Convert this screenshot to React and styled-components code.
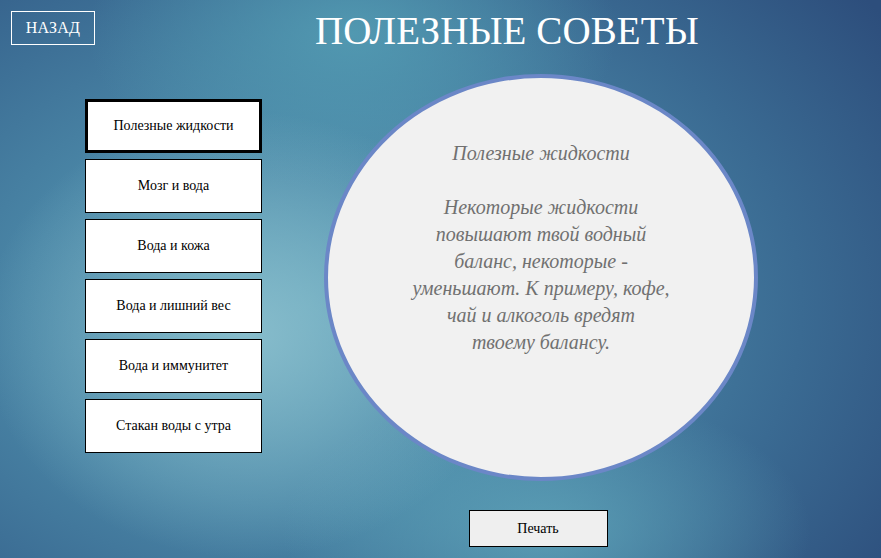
import React from "react";
import styled, { createGlobalStyle } from "styled-components";

const GlobalStyle = createGlobalStyle`
  html, body {
    margin: 0;
    padding: 0;
  }
  body {
    font-family: "Liberation Serif", "DejaVu Serif", serif;
  }
`;

const Page = styled.div`
  width: 881px;
  height: 558px;
  overflow: hidden;
  box-sizing: border-box;
  padding: 11px 0 0 11px;
  background:
    radial-gradient(ellipse 30% 40% at 28% 60%, rgba(140, 192, 206, 0.9) 0%, rgba(140, 192, 206, 0) 100%),
    radial-gradient(ellipse 30% 28% at 40% 6%, rgba(84, 158, 180, 0.85) 0%, rgba(84, 158, 180, 0) 100%),
    radial-gradient(ellipse 30% 25% at 62% 95%, rgba(96, 166, 186, 0.8) 0%, rgba(96, 166, 186, 0) 100%),
    radial-gradient(ellipse 80% 90% at 35% 55%, #5d9fb7 0%, #4a86a6 40%, #3a6a92 70%, #2d4e7c 100%);
`;

const Header = styled.header`
  display: flex;
  align-items: flex-start;
  height: 63px;
`;

const BackButton = styled.button`
  width: 84px;
  height: 34px;
  background: transparent;
  border: 1px solid #ffffff;
  color: #ffffff;
  font-family: inherit;
  font-size: 16px;
  letter-spacing: 0.3px;
  cursor: pointer;
  padding: 0;
`;

const Title = styled.h1`
  margin: -3px 0 0 220px;
  color: #ffffff;
  font-weight: normal;
  font-size: 39px;
  line-height: 46px;
  letter-spacing: 0.1px;
`;

const Main = styled.main`
  display: flex;
  align-items: flex-start;
  padding-left: 74px;
  gap: 62px;
`;

const Menu = styled.nav`
  display: flex;
  flex-direction: column;
  gap: 6px;
  margin-top: 25px;
`;

const MenuItem = styled.button`
  width: 177px;
  height: 54px;
  box-sizing: border-box;
  background: #ffffff;
  border: ${(p) => (p.$active ? "3px" : "1px")} solid #000000;
  color: #000000;
  font-family: inherit;
  font-size: 14px;
  cursor: pointer;
  padding: 0;
`;

const Content = styled.section`
  display: flex;
  flex-direction: column;
  align-items: center;
  gap: 29px;
`;

const Circle = styled.div`
  width: 434px;
  height: 407px;
  box-sizing: border-box;
  border-radius: 50%;
  border: 4px solid #6b87c7;
  background: #f1f1f1;
  display: flex;
  flex-direction: column;
  align-items: center;
  padding-top: 62px;
`;

const Tip = styled.div`
  width: 300px;
  text-align: center;
  color: #707070;
  font-style: italic;
  font-size: 20px;
  line-height: 27px;
`;

const TipTitle = styled.p`
  margin: 0 0 27px;
`;

const TipText = styled.p`
  margin: 0;
`;

const PrintButton = styled.button`
  width: 139px;
  height: 37px;
  margin-right: 6px;
  box-sizing: border-box;
  background: #efefef;
  border: 1px solid #000000;
  color: #000000;
  font-family: inherit;
  font-size: 14px;
  cursor: pointer;
  padding: 0;
`;

const menu = [
  "Полезные жидкости",
  "Мозг и вода",
  "Вода и кожа",
  "Вода и лишний вес",
  "Вода и иммунитет",
  "Стакан воды с утра",
];

export default function App() {
  return (
    <>
      <GlobalStyle />
      <Page>
        <Header>
          <BackButton>НАЗАД</BackButton>
          <Title>ПОЛЕЗНЫЕ СОВЕТЫ</Title>
        </Header>
        <Main>
          <Menu>
            {menu.map((item, i) => (
              <MenuItem key={item} $active={i === 0}>
                {item}
              </MenuItem>
            ))}
          </Menu>
          <Content>
            <Circle>
              <Tip>
                <TipTitle>Полезные жидкости</TipTitle>
                <TipText>
                  Некоторые жидкости
                  <br />
                  повышают твой водный
                  <br />
                  баланс, некоторые -
                  <br />
                  уменьшают. К примеру, кофе,
                  <br />
                  чай и алкоголь вредят
                  <br />
                  твоему балансу.
                </TipText>
              </Tip>
            </Circle>
            <PrintButton>Печать</PrintButton>
          </Content>
        </Main>
      </Page>
    </>
  );
}
